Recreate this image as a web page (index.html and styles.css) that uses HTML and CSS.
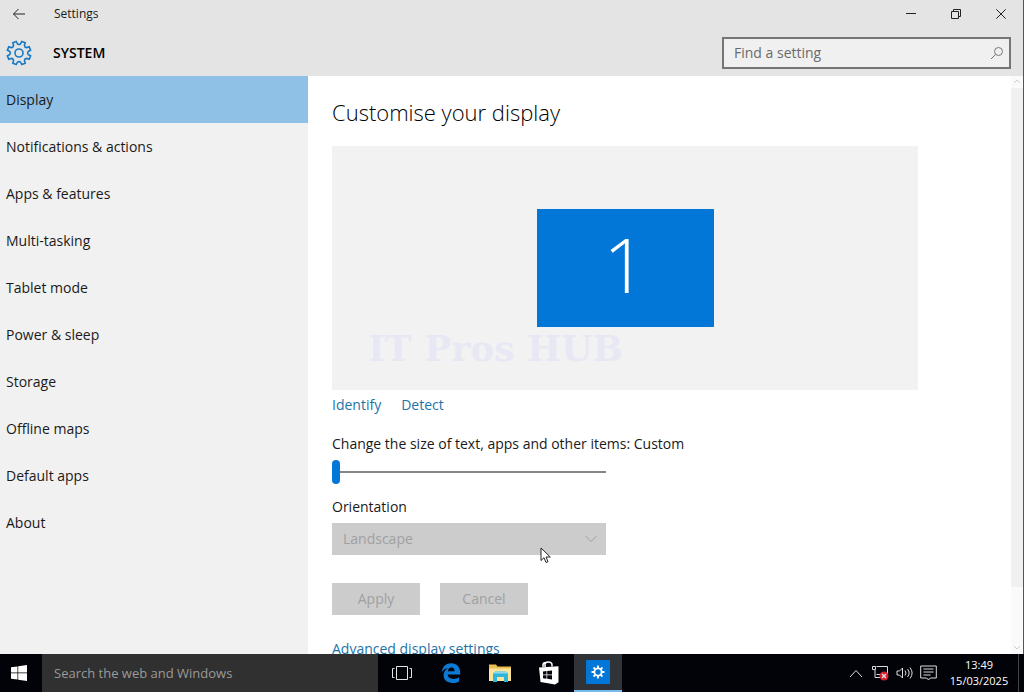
FILE: index.html
```html
<!DOCTYPE html>
<html lang="en-GB">
<head>
<meta charset="utf-8">
<title>Settings</title>
<link rel="stylesheet" href="styles.css">
</head>
<body>
<svg class="defs" aria-hidden="true">
  <symbol id="gear" viewBox="-12 -12 24 24">
    <path d="M1.4-8.5 2.6-10.7 5.7-9.4 5-7Q5.2-5.2 7-5L9.4-5.7 10.7-2.6 8.5-1.4Q7.3 0 8.5 1.4L10.7 2.6 9.4 5.7 7 5Q5.2 5.2 5 7L5.7 9.4 2.6 10.7 1.4 8.5Q0 7.3-1.4 8.5L-2.6 10.7-5.7 9.4-5 7Q-5.2 5.2-7 5L-9.4 5.7-10.7 2.6-8.5 1.4Q-7.3 0-8.5-1.4L-10.7-2.6-9.4-5.7-7-5Q-5.2-5.2-5-7L-5.7-9.4-2.6-10.7-1.4-8.5Q0-7.3 1.4-8.5Z"/>
    <circle r="3.7"/>
  </symbol>
  <symbol id="gear-small" viewBox="-7 -7 14 14">
    <circle r="3.600" stroke-width="1.800"/>
    <path stroke-width="1.800" d="M0-4v-2.500M0 4v2.500M-4 0h-2.500M4 0h2.500M2.800-2.800 4.500-4.500M-2.800-2.800-4.500-4.500M2.800 2.800 4.500 4.500M-2.800 2.800-4.500 4.500"/>
  </symbol>
</svg>
<div class="window">
  <header class="header">
    <div class="titlebar">
      <button class="icon-button back" aria-label="Back"><svg width="14" height="12" viewBox="0 0 14 12"><path d="M13 6H1.500M6.500 1 1.500 6l5 5"/></svg></button>
      <span class="title">Settings</span>
      <div class="window-controls">
        <button class="icon-button" aria-label="Minimise"><svg width="10" height="10" viewBox="0 0 10 10"><path d="M0 4.500h10"/></svg></button>
        <button class="icon-button" aria-label="Restore"><svg width="10" height="10" viewBox="0 0 10 10"><path d="M.5 2.500h7v7h-7zM2.500 2.500v-2h7v7h-2"/></svg></button>
        <button class="icon-button" aria-label="Close"><svg width="10" height="10" viewBox="0 0 10 10"><path d="m.3.300 9.400 9.400M9.700.300.300 9.700"/></svg></button>
      </div>
    </div>
    <div class="section-bar">
      <svg class="gear" width="26" height="26"><use href="#gear"/></svg>
      <strong class="section-name">SYSTEM</strong>
      <label class="search">
        <input type="search" placeholder="Find a setting" aria-label="Find a setting">
        <svg width="14" height="14" viewBox="0 0 14 14"><circle cx="8.500" cy="5.500" r="4"/><path d="M5.700 8.300 1 13"/></svg>
      </label>
    </div>
  </header>
  <div class="body">
    <nav class="sidebar">
      <a class="nav-item selected" href="#display">Display</a>
      <a class="nav-item" href="#notifications">Notifications &amp; actions</a>
      <a class="nav-item" href="#apps">Apps &amp; features</a>
      <a class="nav-item" href="#multitasking">Multi-tasking</a>
      <a class="nav-item" href="#tablet">Tablet mode</a>
      <a class="nav-item" href="#power">Power &amp; sleep</a>
      <a class="nav-item" href="#storage">Storage</a>
      <a class="nav-item" href="#maps">Offline maps</a>
      <a class="nav-item" href="#defaults">Default apps</a>
      <a class="nav-item" href="#about">About</a>
    </nav>
    <main class="content">
      <h1 class="heading">Customise your display</h1>
      <div class="preview">
        <div class="monitor">1</div>
        <span class="watermark">IT Pros HUB</span>
      </div>
      <div class="links">
        <a class="link" href="#identify">Identify</a>
        <a class="link" href="#detect">Detect</a>
      </div>
      <label class="label" for="scale">Change the size of text, apps and other items: Custom</label>
      <input class="slider" id="scale" type="range" min="0" max="3" value="0">
      <label class="label orientation-label" for="orientation">Orientation</label>
      <div class="select-wrap">
        <select class="select" id="orientation" disabled><option>Landscape</option></select>
        <svg class="select-arrow" width="12" height="8" viewBox="0 0 12 8"><path d="m.5 1 5.500 5.500L11.500 1"/></svg>
        <svg class="cursor" width="12" height="17" viewBox="0 0 12 17"><path d="M1 1v12.500l3-2.800 2 4.800 2-.9-2-4.600h4.300z"/></svg>
      </div>
      <div class="actions">
        <button class="button" disabled>Apply</button>
        <button class="button" disabled>Cancel</button>
      </div>
      <a class="link" href="#advanced">Advanced display settings</a>
    </main>
    <div class="scrollbar" aria-hidden="true">
      <svg width="8" height="12" viewBox="0 0 8 12"><path d="m1 7 3-3 3 3"/></svg>
      <div class="scroll-track"><div class="scroll-thumb"></div></div>
      <svg width="8" height="12" viewBox="0 0 8 12"><path d="m1 4 3 3 3-3"/></svg>
    </div>
  </div>
</div>
<footer class="taskbar">
  <button class="task start" aria-label="Start"><svg width="16" height="16" viewBox="0 0 16 16"><path fill="#fff" d="M0 2.300 6.500 1.400v6.200H0zM7.200 1.300 16 0v7.600H7.200zM0 8.300h6.500v6.300L0 13.700zM7.200 8.300H16V16l-8.800-1.300z"/></svg></button>
  <input class="task-search" type="text" placeholder="Search the web and Windows" aria-label="Search the web and Windows">
  <div class="tasks">
    <button class="task" aria-label="Task view"><svg width="20" height="16" viewBox="0 0 20 16" fill="none" stroke="#e4e4e4"><path d="M4.500 1.500h11v13h-11zM2.500 3.500h-2v9h2M17.500 3.500h2v9h-2"/></svg></button>
    <button class="task" aria-label="Edge"><svg width="20" height="20" viewBox="0 0 20 20"><path fill="#0b7ad6" d="M.8 9C1.300 3.600 5.200.2 10.300.2c5.600 0 8.900 3.900 8.900 9.200v2.200H6.700c.1 3 2.600 4.300 5.600 4.300 2.200 0 4.100-.6 5.800-1.600v4.100c-2 1-4.200 1.500-6.800 1.500-5 0-8.700-3-8.700-7.600 0-3 1.600-5.500 4.300-7C4.400 5.500 2.300 6.800.8 9zm6-.8h6.800c0-2.400-1.100-3.800-3.300-3.800-1.900 0-3.200 1.500-3.500 3.800z"/></svg></button>
    <button class="task" aria-label="File Explorer"><svg width="22" height="20" viewBox="0 0 22 20"><path fill="#e9bd50" d="M0 1.500h7l1.500 2H22V18H0z"/><path fill="#fbe49a" d="M0 5.500h22V18H0z"/><path fill="#2fb5d9" d="M4 10.500 6 8.500h11l2 2V19h-4v-5H8v5H4z"/><path fill="#8edbe9" d="M4 10.500 6 8.500h11l2 2z"/></svg></button>
    <button class="task" aria-label="Store"><svg width="22" height="24" viewBox="0 0 22 24"><path fill="#fff" d="m1 6.500 19.500-1.300v16L17 23.500 2.500 21z"/><path fill="none" stroke="#fff" stroke-width="1.500" d="M7 6V3.500C7 2 8 1 10 1s4 1 4 3v1.500M5 6V4c0-1.500 1-2.500 3-2.500"/><path fill="#05070c" d="m5 10.500 3.500-.4v3.400H5zm4.200-.5 4.800-.6v4.100H9.200zM5 14.200h3.500v3.500L5 17.300zm4.200 0H14v4.200l-4.800-.6z"/></svg></button>
    <button class="task active" aria-label="Settings"><span class="tile"><svg width="14" height="14"><use href="#gear-small"/></svg></span></button>
  </div>
  <div class="tray">
    <button class="tray-button" aria-label="Show hidden icons"><svg width="14" height="9" viewBox="0 0 14 9"><path d="m1 8 6-6.500L13 8"/></svg></button>
    <button class="tray-button" aria-label="Network disconnected"><svg width="17" height="16" viewBox="0 0 17 16"><path d="M4.500 1.500h11v8h-11M3 5v7.500h6M.5 1.500h3v3h-3z"/><circle cx="12" cy="11" r="4.500" fill="#d51d2d" stroke="none"/><path stroke-width="1.500" d="m10 9 4 4m0-4-4 4"/></svg></button>
    <button class="tray-button" aria-label="Volume"><svg width="17" height="14" viewBox="0 0 17 14"><path d="M1 5h2.500l3-3v10l-3-3H1zM9 4.500q2 2.500 0 5M11.500 3q3.300 4 0 8M14 1.500q4.200 5.500 0 11"/></svg></button>
    <button class="tray-button" aria-label="Action centre"><svg width="17" height="16" viewBox="0 0 17 16"><path d="M.7 1h15.600v12h-6L8.500 15l-1.800-2h-6zM3.500 4h10M3.500 7h10M3.500 10h7"/></svg></button>
    <div class="clock"><time>13:49</time><time>15/03/2025</time></div>
    <div class="show-desktop"></div>
  </div>
</footer>
</body>
</html>
```
FILE: styles.css
```css
* { box-sizing: border-box; }
body {
  margin: 0;
  height: 100vh;
  display: flex;
  flex-direction: column;
  overflow: hidden;
  font: 14px/20px "Open Sans", "Noto Sans", sans-serif;
  color: #1a1a1a;
  background: #000;
}
button, input, select { font: inherit; color: inherit; border: 0; border-radius: 0; padding: 0; background: none; }
svg { display: block; flex: none; }
.defs { position: absolute; width: 0; height: 0; }
.window {
  flex: 1;
  min-height: 0;
  display: flex;
  flex-direction: column;
  background: #fff;
  border-right: 1px solid #555;
}
.header { background: #e4e4e4; }
.titlebar { display: flex; align-items: center; height: 28px; font-size: 12px; }
.icon-button { display: flex; align-items: center; justify-content: center; width: 45px; height: 28px; fill: none; stroke: #222; }
.back { width: 38px; margin-right: 16px; }
.window-controls { display: flex; margin-left: auto; }
.section-bar { display: flex; align-items: center; height: 48px; padding: 2px 12px 0 6px; }
.gear { fill: none; stroke: #1a7bc4; stroke-width: 1.500; }
.section-name { margin-left: 21px; font-weight: 600; color: #000; }
.search {
  display: flex;
  align-items: center;
  width: 289px;
  height: 32px;
  margin-left: auto;
  padding: 0 5px 0 10px;
  border: 2px solid #757575;
  background: #f0f0f0;
  fill: none;
  stroke: #777;
}
.search input { flex: 1; min-width: 0; outline: 0; appearance: none; }
.search input::placeholder { color: #6b6b6b; opacity: 1; }
.body { flex: 1; min-height: 0; display: flex; }
.sidebar { width: 308px; flex: none; background: #f1f1f1; }
.nav-item { display: flex; align-items: center; height: 47px; padding: 0 6px; color: inherit; text-decoration: none; }
.selected { background: #8fc0e6; }
.content { flex: 1; min-width: 0; padding: 20px 24px 0; overflow: hidden; }
.heading { margin: 0 0 18px; font-size: 22px; line-height: 32px; font-weight: 300; color: #000; }
.preview {
  position: relative;
  display: flex;
  align-items: center;
  justify-content: center;
  max-width: 586px;
  height: 244px;
  background: #f2f2f2;
}
.monitor {
  width: 177px;
  height: 118px;
  background: #0277d8;
  color: #fff;
  font-size: 76px;
  font-weight: 300;
  line-height: 110px;
  text-align: center;
}
.watermark {
  position: absolute;
  left: 36px;
  bottom: 22px;
  font: bold 36px/40px "DejaVu Serif", serif;
  color: #e8e8f4;
  white-space: nowrap;
}
.links { display: flex; gap: 20px; margin: 5px 0 19px; }
.link { color: #1d74a8; text-decoration: none; }
.label { display: block; }
.slider { display: block; width: 274px; height: 24px; margin: 6px 0 13px; appearance: none; }
.slider::-webkit-slider-runnable-track { height: 24px; background: linear-gradient(#868686, #868686) center / 100% 2px no-repeat; }
.slider::-webkit-slider-thumb { appearance: none; width: 8px; height: 24px; border-radius: 4px; background: #0277d8; }
.select-wrap { position: relative; width: 274px; margin: 6px 0 28px; }
.select { display: block; width: 100%; height: 32px; padding: 0 11px; appearance: none; background: #ccc; color: #a0a0a0; opacity: 1; }
.select-arrow { position: absolute; right: 9px; top: 12px; fill: none; stroke: #a0a0a0; }
.cursor { position: absolute; left: 208px; top: 24px; fill: #fff; stroke: #222; }
.actions { display: flex; gap: 20px; margin-bottom: 24px; }
.button { width: 88px; height: 32px; background: #ccc; color: #a0a0a0; }
.scrollbar { display: flex; flex-direction: column; align-items: center; width: 12px; background: #fafafa; fill: none; stroke: #ccc; }
.scroll-track { flex: 1; width: 100%; }
.scroll-thumb { height: 90%; background: #f0f0f0; }
.taskbar { display: flex; height: 38px; flex: none; background: #020308; }
.tasks { display: flex; gap: 1px; }
.task { display: flex; align-items: center; justify-content: center; width: 48px; flex: none; }
.start { width: 42px; padding-right: 4px; }
.task-search { width: 336px; min-width: 0; flex: none; padding: 0 12px; background: #303030; color: #fff; font-size: 13px; }
.task-search::placeholder { color: #9a9a9a; opacity: 1; }
.active { background: #303338; border-bottom: 2px solid #76b9ed; }
.tile { display: flex; align-items: center; justify-content: center; width: 24px; height: 24px; background: #0277d8; fill: none; stroke: #fff; }
.tray { display: flex; align-items: center; margin-left: auto; fill: none; stroke: #ddd; }
.tray-button { display: flex; align-items: center; justify-content: center; width: 24px; height: 38px; }
.clock { display: flex; flex-direction: column; align-items: center; width: 78px; font-size: 11px; line-height: 16px; color: #fff; }
.show-desktop { align-self: stretch; width: 6px; border-left: 1px solid #444; }
```
